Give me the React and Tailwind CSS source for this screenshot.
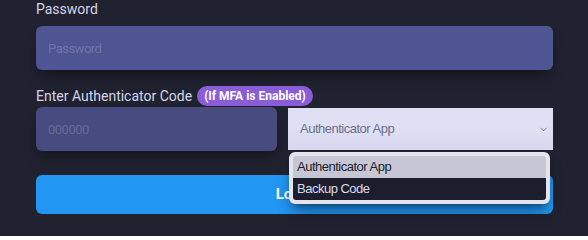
import { ChevronDown } from "lucide-react";

export default function App() {
  return (
    <div className="w-[588px] h-[236px] overflow-hidden bg-[#212230] font-['Roboto',sans-serif]">
      <div className="ml-[36px] w-[517px]">
        <div className="h-[20px] text-[14px] leading-[20px] text-[#d3d5ea] -mt-[1px]">Password</div>
        <input
          type="password"
          placeholder="Password"
          className="mt-[7px] block w-full h-[44px] rounded-md bg-[#4f5592] px-3 text-[13px] tracking-[-0.5px] text-white placeholder:text-[#6f74a6] outline-none shadow-lg shadow-black/30"
        />

        <div className="mt-[16px] h-[20px] flex items-center gap-[5px]">
          <span className="text-[14px] text-[#d3d5ea]">Enter Authenticator Code</span>
          <span className="h-[20px] px-[7px] rounded-full bg-[#8a5cd8] text-white text-[12px] font-bold leading-[20px]">
            (If MFA is Enabled)
          </span>
        </div>

        <div className="mt-[1px] flex items-center gap-[11px]">
          <input
            type="text"
            placeholder="000000"
            className="block w-[241px] h-[44px] rounded-md bg-[#474b80] px-3 text-[13px] tracking-[-0.5px] text-white placeholder:text-[#666a94] outline-none shadow-lg shadow-black/30"
          />
          <div className="relative w-[265px] font-['Liberation_Sans',Arial,sans-serif] text-[13px] tracking-[-0.5px]">
            <div className="h-[42px] flex items-center justify-between pl-3 pr-[4px] bg-gradient-to-b from-[#dfe0f4] via-[#dfe0f4] to-[#d6d7ec] text-[#6c6f8e]">
              <span>Authenticator App</span>
              <ChevronDown size={11} strokeWidth={1.6} className="text-[#55586e]" />
            </div>
            <div className="absolute left-[1px] top-[44px] w-[261px] rounded-md border-[4px] border-[#e4e4ef] bg-[#e4e4ef] shadow-lg shadow-black/40 z-10">
              <div className="h-[22px] px-[4px] flex items-center rounded-t-[3px] bg-[#c6c6d5] text-[#1c1d2a]">Authenticator App</div>
              <div className="h-[22px] px-[4px] flex items-center rounded-b-[3px] bg-[#1d1e2d] text-[#d9dcef]">Backup Code</div>
            </div>
          </div>
        </div>

        <button className="mt-[24px] w-full h-[39px] rounded-md bg-[#2196f3] text-white text-[15px] font-bold">
          Login
        </button>
      </div>
    </div>
  );
}
